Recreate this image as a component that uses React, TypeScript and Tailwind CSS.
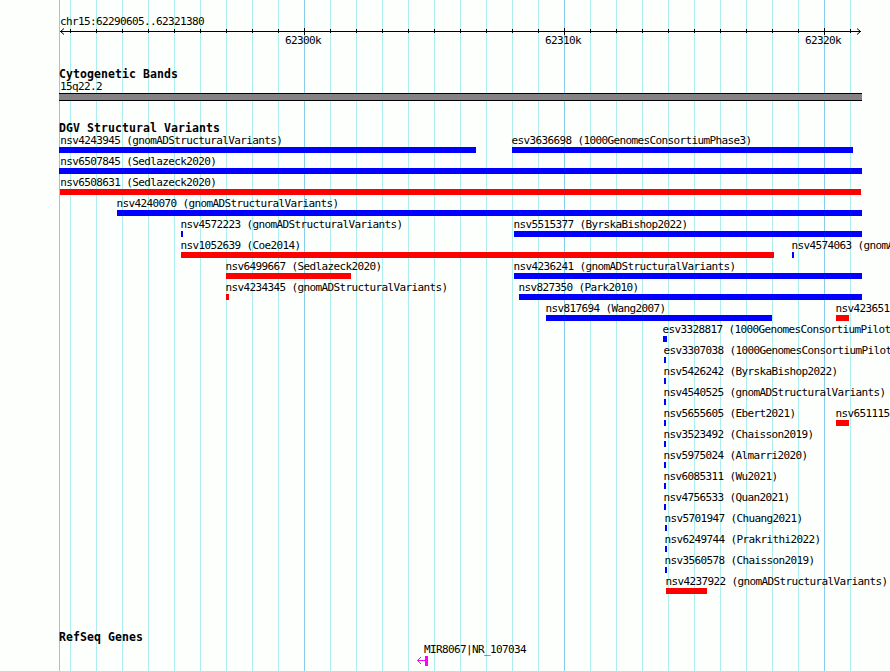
import { FC } from "react";
import clsx from "clsx";

type Variant = {
  start: number;
  end: number;
  label: string;
  loss?: boolean;
};

const LEFT = 59;

const minorLines = Array.from({ length: 31 }, (_, i) => 70 + i * 26);
const majorTicks = [
  { x: 304, label: "62300k" },
  { x: 564, label: "62310k" },
  { x: 824, label: "62320k" },
];

const isMajor = (x: number) => majorTicks.some((t) => t.x === x);

const rows: Variant[][] = [
  [
    { start: 59, end: 476, label: "nsv4243945 (gnomADStructuralVariants)" },
    { start: 512, end: 853, label: "esv3636698 (1000GenomesConsortiumPhase3)" },
  ],
  [{ start: 59, end: 862, label: "nsv6507845 (Sedlazeck2020)" }],
  [{ start: 60, end: 861, label: "nsv6508631 (Sedlazeck2020)", loss: true }],
  [{ start: 117, end: 862, label: "nsv4240070 (gnomADStructuralVariants)" }],
  [
    { start: 181, end: 183, label: "nsv4572223 (gnomADStructuralVariants)" },
    { start: 514, end: 862, label: "nsv5515377 (ByrskaBishop2022)" },
  ],
  [
    { start: 181, end: 774, label: "nsv1052639 (Coe2014)", loss: true },
    { start: 792, end: 794, label: "nsv4574063 (gnomA" },
  ],
  [
    { start: 226, end: 351, label: "nsv6499667 (Sedlazeck2020)", loss: true },
    { start: 514, end: 862, label: "nsv4236241 (gnomADStructuralVariants)" },
  ],
  [
    { start: 226, end: 229, label: "nsv4234345 (gnomADStructuralVariants)", loss: true },
    { start: 519, end: 862, label: "nsv827350 (Park2010)" },
  ],
  [
    { start: 546, end: 772, label: "nsv817694 (Wang2007)" },
    { start: 836, end: 849, label: "nsv423651", loss: true },
  ],
  [{ start: 663, end: 667, label: "esv3328817 (1000GenomesConsortiumPilot" }],
  [{ start: 664, end: 666, label: "esv3307038 (1000GenomesConsortiumPilot" }],
  [{ start: 664, end: 666, label: "nsv5426242 (ByrskaBishop2022)" }],
  [{ start: 664, end: 666, label: "nsv4540525 (gnomADStructuralVariants)" }],
  [
    { start: 664, end: 666, label: "nsv5655605 (Ebert2021)" },
    { start: 836, end: 849, label: "nsv651115", loss: true },
  ],
  [{ start: 664, end: 666, label: "nsv3523492 (Chaisson2019)" }],
  [{ start: 664, end: 666, label: "nsv5975024 (Almarri2020)" }],
  [{ start: 664, end: 666, label: "nsv6085311 (Wu2021)" }],
  [{ start: 664, end: 666, label: "nsv4756533 (Quan2021)" }],
  [{ start: 665, end: 667, label: "nsv5701947 (Chuang2021)" }],
  [{ start: 665, end: 667, label: "nsv6249744 (Prakrithi2022)" }],
  [{ start: 665, end: 667, label: "nsv3560578 (Chaisson2019)" }],
  [{ start: 666, end: 707, label: "nsv4237922 (gnomADStructuralVariants)", loss: true }],
];

const TrackTitle: FC<{ children: string }> = ({ children }) => (
  <h2 className="ml-[59px] h-3 text-[11.5px] leading-[13px] font-bold tracking-[0.077px]">
    {children}
  </h2>
);

const GridLines: FC = () => (
  <div className="absolute inset-0 -z-10 flex">
    <div className="ml-[59px] w-px bg-[#87ceeb]" />
    {minorLines.map((x, i) => (
      <div
        key={x}
        className={clsx(
          "w-px",
          i === 0 ? "ml-[10px]" : "ml-[25px]",
          isMajor(x) ? "bg-[#87ceeb]" : "bg-[#afeeee]"
        )}
      />
    ))}
  </div>
);

const Ruler: FC = () => (
  <svg
    className="ml-[59px] block h-[7px] w-[803px]"
    viewBox="59 28 803 7"
    fill="none"
    stroke="black"
    shapeRendering="crispEdges"
  >
    <path d="M60 31.5H861" />
    <path
      d="M64 28.5L60.5 31.5L64 34.5M857 28.5L860.5 31.5L857 34.5"
      shapeRendering="auto"
    />
    {minorLines.map((x) => (
      <path key={x} d={isMajor(x) ? `M${x + 0.5} 28V35` : `M${x + 0.5} 29V33`} />
    ))}
  </svg>
);

const VariantRow: FC<{ items: Variant[] }> = ({ items }) => (
  <div className="flex h-[21px]">
    {items.map((item, i) => (
      <div
        key={item.label}
        className="shrink-0"
        style={{
          width: item.end - item.start,
          marginLeft: item.start - (i === 0 ? 0 : items[i - 1].end),
        }}
      >
        <p
          className="h-[13px] whitespace-nowrap"
          style={{ marginLeft: Math.max(LEFT + 1.3, item.start - 0.6) - item.start }}
        >
          {item.label}
        </p>
        <div className={clsx("h-1.5", item.loss ? "bg-[#ff0000]" : "bg-[#0000ff]")} />
      </div>
    ))}
  </div>
);

const App: FC = () => {
  return (
    <main className="relative isolate h-[671px] w-[890px] overflow-hidden bg-[#fdfffd] pt-[15px] font-['DejaVu_Sans_Mono',monospace] text-[11px] leading-[13px] tracking-[-0.622px] text-black">
      <GridLines />

      <p className="ml-[60px]">chr15:62290605..62321380</p>
      <Ruler />
      <div className="-mt-px ml-[285px] flex h-[34px] gap-[224px]">
        {majorTicks.map((tick) => (
          <span key={tick.x} className="w-9">
            {tick.label}
          </span>
        ))}
      </div>

      <TrackTitle>Cytogenetic Bands</TrackTitle>
      <p className="ml-[60px]">15q22.2</p>
      <div className="ml-[59px] h-2 w-[803px] border-y border-black bg-[#848284]" />

      <div className="mt-[21px]">
        <TrackTitle>DGV Structural Variants</TrackTitle>
        {rows.map((items) => (
          <VariantRow key={items[0].label} items={items} />
        ))}
      </div>

      <div className="mt-[35px]">
        <TrackTitle>RefSeq Genes</TrackTitle>
        <p className="ml-[424px]">MIR8067|NR_107034</p>
        <svg
          className="ml-[417px] block h-[10px] w-[11px]"
          viewBox="0 0 11 10"
          fill="none"
          stroke="#ff00ff"
        >
          <path d="M0.5 4.5H9M4 1L0.5 4.5L4 8" />
          <path d="M8 0H11V10H8Z" fill="#ff00ff" stroke="none" />
        </svg>
      </div>
    </main>
  );
};

export default App;
